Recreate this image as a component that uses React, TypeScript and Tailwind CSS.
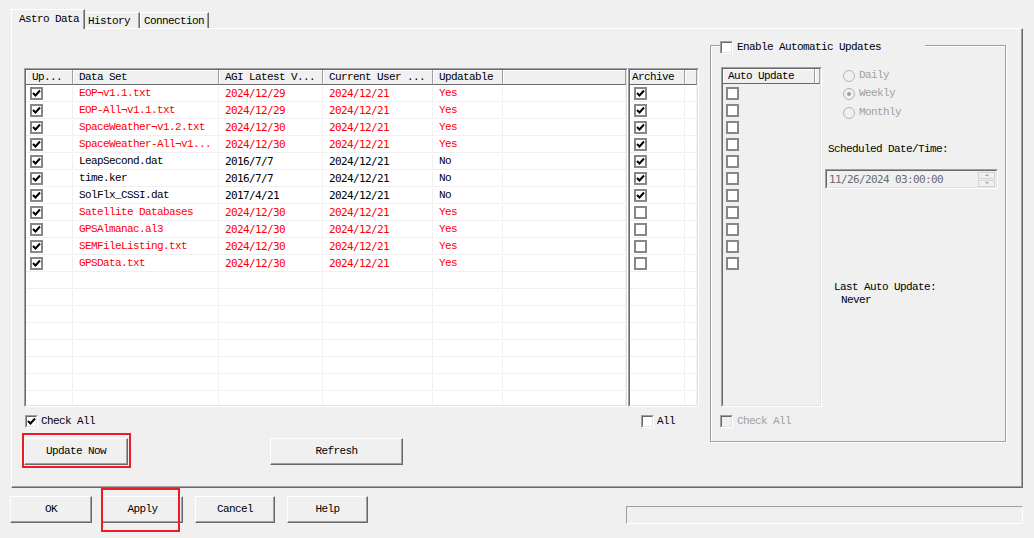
import React from 'react'

const RED = 'text-[#ff0000]'

interface Row {
  name: string
  agi: string
  user: string
  updatable: boolean
  archive: boolean
}

const rows: Row[] = [
  { name: 'EOP¬v1.1.txt', agi: '2024/12/29', user: '2024/12/21', updatable: true, archive: true },
  { name: 'EOP-All¬v1.1.txt', agi: '2024/12/29', user: '2024/12/21', updatable: true, archive: true },
  { name: 'SpaceWeather¬v1.2.txt', agi: '2024/12/30', user: '2024/12/21', updatable: true, archive: true },
  { name: 'SpaceWeather-All¬v1...', agi: '2024/12/30', user: '2024/12/21', updatable: true, archive: true },
  { name: 'LeapSecond.dat', agi: '2016/7/7', user: '2024/12/21', updatable: false, archive: true },
  { name: 'time.ker', agi: '2016/7/7', user: '2024/12/21', updatable: false, archive: true },
  { name: 'SolFlx_CSSI.dat', agi: '2017/4/21', user: '2024/12/21', updatable: false, archive: true },
  { name: 'Satellite Databases', agi: '2024/12/30', user: '2024/12/21', updatable: true, archive: false },
  { name: 'GPSAlmanac.al3', agi: '2024/12/30', user: '2024/12/21', updatable: true, archive: false },
  { name: 'SEMFileListing.txt', agi: '2024/12/30', user: '2024/12/21', updatable: true, archive: false },
  { name: 'GPSData.txt', agi: '2024/12/30', user: '2024/12/21', updatable: true, archive: false },
]

const TOTAL_ROWS = 19

function Tick() {
  return (
    <svg width="9" height="9" viewBox="0 0 9 9" className="block">
      <path d="M1 4 L3.5 6.5 L8 1.5" fill="none" stroke="#000" strokeWidth="2" />
    </svg>
  )
}

// flat checkbox used inside the list views
function ListCheck({ checked }: { checked?: boolean }) {
  return (
    <div className="w-[13px] h-[13px] border-2 border-[#878787] bg-white flex items-center justify-center">
      {checked && <Tick />}
    </div>
  )
}

// classic sunken checkbox
function Check({ checked, disabled }: { checked?: boolean; disabled?: boolean }) {
  return (
    <div className="w-[13px] h-[13px] border border-t-[#a0a0a0] border-l-[#a0a0a0] border-r-white border-b-white">
      <div
        className={`w-full h-full border border-t-[#696969] border-l-[#696969] border-r-[#e3e3e3] border-b-[#e3e3e3] flex items-center justify-center ${
          disabled ? 'bg-[#f0f0f0]' : 'bg-white'
        }`}
      >
        {checked && <Tick />}
      </div>
    </div>
  )
}

function Radio({ on }: { on?: boolean }) {
  return (
    <div className="w-[12px] h-[12px] rounded-full border border-[#b4b4b4] bg-[#f0f0f0] flex items-center justify-center">
      {on && <div className="w-[4px] h-[4px] rounded-full bg-[#a0a0a0]" />}
    </div>
  )
}

function Button({ label, className = '' }: { label: string; className?: string }) {
  return (
    <div
      className={`h-[27px] flex items-center justify-center bg-[#f0f0f0] border border-t-white border-l-white border-r-[#696969] border-b-[#696969] shadow-[inset_-1px_-1px_0_#a0a0a0] ${className}`}
    >
      {label}
    </div>
  )
}

function Sunken({ className = '', inner = 'bg-white', children }: { className?: string; inner?: string; children?: React.ReactNode }) {
  return (
    <div className={`border border-t-[#a0a0a0] border-l-[#a0a0a0] border-r-white border-b-white ${className}`}>
      <div className={`w-full h-full border border-t-[#696969] border-l-[#696969] border-r-[#e3e3e3] border-b-[#e3e3e3] overflow-hidden ${inner}`}>
        {children}
      </div>
    </div>
  )
}

const HEAD = 'h-[15px] flex items-center bg-[#f0f0f0] border-r border-r-[#a0a0a0] border-b border-b-[#696969] shadow-[inset_1px_1px_0_white] whitespace-nowrap overflow-hidden'
const CELL = 'h-full flex items-center border-r border-[#f0f0f0] whitespace-nowrap overflow-hidden'
const DATE = "font-['DejaVu_Sans_Mono',monospace] text-[11px] tracking-[-0.62px]"

const cols = ['w-[47px]', 'w-[146px]', 'w-[104px]', 'w-[110px]', 'w-[70px]']

function DataTable() {
  return (
    <Sunken className="w-[604px] h-[339px]">
      <div className="flex">
        <div className={`${HEAD} ${cols[0]} px-[6px]`}>Up...</div>
        <div className={`${HEAD} ${cols[1]} px-[6px]`}>Data Set</div>
        <div className={`${HEAD} ${cols[2]} px-[6px]`}>AGI Latest V...</div>
        <div className={`${HEAD} ${cols[3]} px-[6px]`}>Current User ...</div>
        <div className={`${HEAD} ${cols[4]} px-[6px]`}>Updatable</div>
        <div className={`${HEAD} flex-1`} />
      </div>
      {Array.from({ length: TOTAL_ROWS }).map((_, i) => {
        const r = rows[i]
        const color = r && r.updatable ? RED : 'text-black'
        return (
          <div key={i} className={`flex h-[17px] pt-px border-b border-[#f0f0f0] ${color}`}>
            <div className={`${CELL} ${cols[0]} pl-[4px]`}>{r && <ListCheck checked />}</div>
            <div className={`${CELL} ${cols[1]} px-[6px]`}>{r?.name}</div>
            <div className={`${CELL} ${cols[2]} px-[6px] ${DATE}`}>{r?.agi}</div>
            <div className={`${CELL} ${cols[3]} px-[6px] ${DATE}`}>{r?.user}</div>
            <div className={`${CELL} ${cols[4]} px-[6px]`}>{r ? (r.updatable ? 'Yes' : 'No') : ''}</div>
            <div className={`${CELL} flex-1`} />
          </div>
        )
      })}
    </Sunken>
  )
}

function ArchiveList() {
  return (
    <Sunken className="w-[71px] h-[339px]">
      <div className="flex">
        <div className={`${HEAD} w-[55px] px-[2px]`}>Archive</div>
        <div className={`${HEAD} flex-1`} />
      </div>
      {Array.from({ length: TOTAL_ROWS }).map((_, i) => {
        const r = rows[i]
        return (
          <div key={i} className="flex h-[17px] pt-px border-b border-[#f0f0f0]">
            <div className={`${CELL} w-[55px] pl-[4px]`}>{r && <ListCheck checked={r.archive} />}</div>
            <div className={`${CELL} flex-1`} />
          </div>
        )
      })}
    </Sunken>
  )
}

function AutoUpdateList() {
  return (
    <Sunken className="w-[101px] h-[340px] shrink-0" inner="bg-[#f0f0f0]">
      <div className="flex">
        <div className={`${HEAD} w-[92px] px-[5px]`}>Auto Update</div>
        <div className={`${HEAD} flex-1`} />
      </div>
      {rows.map((_, i) => (
        <div key={i} className="h-[17px] pt-px flex items-center pl-[3px]">
          <ListCheck />
        </div>
      ))}
    </Sunken>
  )
}

const schedule = [
  { label: 'Daily', on: false, h: 'h-[17px]' },
  { label: 'Weekly', on: true, h: 'h-[19px]' },
  { label: 'Monthly', on: false, h: 'h-[19px]' },
]

function AutoGroup() {
  return (
    <div className="relative mt-[16px] ml-[11px] w-[296px] h-[397px] border border-[#a0a0a0] shadow-[inset_1px_1px_0_white,1px_1px_0_white] pt-[21px] pl-[10px] flex flex-col">
      <div className="absolute left-[9px] top-[-5px] w-[205px] h-[13px] bg-[#f0f0f0] flex items-center gap-[4px]">
        <Check />
        <span>Enable Automatic Updates</span>
      </div>

      <div className="flex">
        <AutoUpdateList />
        <div className="ml-[3px] flex flex-col text-[#a0a0a0]">
          {schedule.map((o) => (
            <div key={o.label} className={`${o.h} flex items-center pl-[18px] gap-[4px]`}>
              <Radio on={o.on} />
              <span>{o.label}</span>
            </div>
          ))}
          <div className="mt-[21px] pl-[3px] text-black">Scheduled Date/Time:</div>
          <Sunken className="mt-[13px] w-[173px] h-[20px]" inner="bg-[#f0f0f0]">
            <div className="h-full flex items-center pl-[2px] pr-[1px]">
              <span className={`${DATE} text-[#6d6d6d]`}>11/26/2024 03:00:00</span>
              <div className="ml-auto w-[17px] flex flex-col gap-[1px]">
                <div className="h-[7px] border border-[#d4d4d4] flex items-center justify-center">
                  <div className="w-0 h-0 border-x-[2px] border-x-transparent border-b-[2px] border-b-[#a0a0a0]" />
                </div>
                <div className="h-[7px] border border-[#d4d4d4] flex items-center justify-center">
                  <div className="w-0 h-0 border-x-[2px] border-x-transparent border-t-[2px] border-t-[#a0a0a0]" />
                </div>
              </div>
            </div>
          </Sunken>
          <div className="mt-[92px] pl-[9px] text-black">Last Auto Update:</div>
          <div className="pl-[16px] text-black">Never</div>
        </div>
      </div>

      <div className="mt-[8px] -ml-px flex items-center gap-[4px] text-[#a0a0a0]">
        <Check disabled />
        <span>Check All</span>
      </div>
    </div>
  )
}

export default function App() {
  return (
    <div className="w-[1034px] h-[538px] bg-[#f0f0f0] pt-[9px] pl-[11px] overflow-hidden text-black font-['Liberation_Mono',monospace] text-[11px] tracking-[-0.6px] leading-[13px]">
      {/* tabs */}
      <div className="flex items-end h-[19px]">
        <div className="relative z-10 -mb-px h-[20px] w-[74px] pl-[7px] pt-[3px] bg-[#f0f0f0] border-l border-t border-white border-r border-r-[#696969] shadow-[inset_-1px_0_0_#a0a0a0]">
          Astro Data
        </div>
        <div className="h-[16px] w-[55px] pl-[3px] pt-[2px] border-t border-white border-r border-r-[#696969] shadow-[inset_-1px_0_0_#a0a0a0]">
          History
        </div>
        <div className="h-[16px] w-[69px] pl-[3px] pt-[2px] border-l border-t border-white border-r border-r-[#696969] shadow-[inset_-1px_0_0_#a0a0a0]">
          Connection
        </div>
      </div>

      {/* tab page */}
      <div className="w-[1012px] h-[460px] border-l border-t border-white border-r border-b border-r-[#696969] border-b-[#696969] shadow-[inset_-1px_-1px_0_#a0a0a0] pl-[12px] flex items-start">
        <div className="mt-[39px] flex flex-col w-[675px]">
          <div className="flex">
            <DataTable />
            <ArchiveList />
          </div>

          <div className="mt-[8px] flex items-center h-[13px]">
            <div className="ml-px flex items-center gap-[3px]">
              <Check checked />
              <span>Check All</span>
            </div>
            <div className="ml-[546px] flex items-center gap-[3px]">
              <Check />
              <span>All</span>
            </div>
          </div>

          <div className="mt-[10px] flex">
            <div className="relative">
              <Button label="Update Now" className="w-[104px]" />
              <div className="absolute left-[-2px] top-[-5px] w-[109px] h-[35px] border-2 border-[#ec1c24]" />
            </div>
            <Button label="Refresh" className="ml-[142px] w-[133px]" />
          </div>
        </div>

        <AutoGroup />
      </div>

      {/* dialog buttons */}
      <div className="mt-[8px] w-[1012px] flex items-start">
        <Button label="OK" className="-ml-px w-[82px]" />
        <div className="relative ml-[10px]">
          <Button label="Apply" className="w-[81px]" />
          <div className="absolute left-[-1px] top-[-8px] w-[79px] h-[44px] border-2 border-[#ec1c24]" />
        </div>
        <Button label="Cancel" className="ml-[12px] w-[80px]" />
        <Button label="Help" className="ml-[12px] w-[81px]" />
        <div className="ml-auto mt-[10px] w-[397px] h-[18px] border border-t-[#a0a0a0] border-l-[#a0a0a0] border-r-white border-b-white" />
      </div>
    </div>
  )
}
